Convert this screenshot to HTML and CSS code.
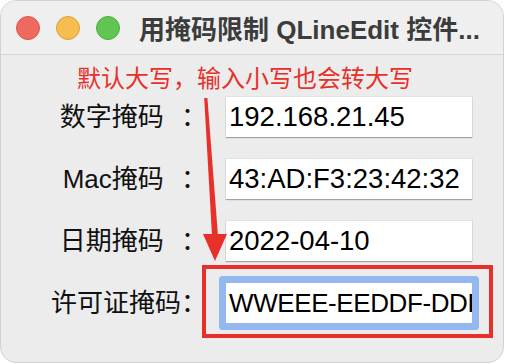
FILE: index.html
```html
<!DOCTYPE html>
<html lang="zh-CN">
<head>
<meta charset="utf-8">
<title>用掩码限制 QLineEdit 控件</title>
<link rel="stylesheet" href="styles.css">
</head>
<body>
<div class="window">
  <div class="titlebar">
    <div class="lights">
      <span class="light red"></span>
      <span class="light yellow"></span>
      <span class="light green"></span>
    </div>
    <div class="title">用掩码限制 QLineEdit 控件...</div>
  </div>
  <div class="content">
    <div class="note">默认大写，输入小写也会转大写</div>
    <div class="form">
      <div class="label">数字掩码 ：</div>
      <div class="field">192.168.21.45</div>
      <div class="label">Mac掩码 ：</div>
      <div class="field">43:AD:F3:23:42:32</div>
      <div class="label">日期掩码 ：</div>
      <div class="field">2022-04-10</div>
      <div class="label">许可证掩码：</div>
      <div class="field focused">WWEEE-EEDDF-DDDDD</div>
    </div>
  </div>
  <svg class="annot" width="506" height="364" viewBox="0 0 506 364" xmlns="http://www.w3.org/2000/svg">
    <polygon points="204.2,98 207.4,98 218,236 212,236" fill="#e8302a"/>
    <polygon points="203,234 227,234 215,261" fill="#e8302a"/>
    <rect x="204" y="267" width="287" height="69" fill="none" stroke="#e8302a" stroke-width="4"/>
  </svg>
</div>
</body>
</html>
```

FILE: styles.css
```css
html, body {
  margin: 0;
  padding: 0;
  background: #ffffff;
}

.window {
  position: relative;
  width: 504px;
  height: 363px;
  box-sizing: border-box;
  border: 1px solid #d2d2d2;
  border-radius: 16px;
  background: #ececec;
  overflow: hidden;
  font-family: "Liberation Sans", "Noto Sans CJK SC", sans-serif;
}

.titlebar {
  height: 53px;
  display: flex;
  align-items: center;
  padding-left: 15px;
  background: #efefef;
  border-bottom: 1px solid #d6d6d6;
}

.lights {
  display: flex;
  gap: 16px;
}

.light {
  width: 24px;
  height: 24px;
  border-radius: 50%;
  box-sizing: border-box;
}

.red { background: #ee6a5f; border: 1px solid #d8564c; }
.yellow { background: #f5be4f; border: 1px solid #d9a23a; }
.green { background: #61c554; border: 1px solid #4ead43; }

.title {
  margin-left: 19px;
  font-size: 26px;
  font-weight: bold;
  color: #3c3c3c;
  white-space: nowrap;
}

.content {
  padding-top: 10px;
}

.note {
  margin-left: 76px;
  font-size: 24px;
  line-height: 24px;
  height: 24px;
  color: #e8302a;
  font-family: "Noto Sans CJK SC", sans-serif;
}

.form {
  margin-top: 8px;
  display: grid;
  grid-template-columns: 206px 246px;
  grid-auto-rows: 40px;
  column-gap: 19px;
  row-gap: 22px;
}

.label {
  justify-self: end;
  align-self: center;
  font-size: 26px;
  line-height: 40px;
  word-spacing: 10px;
  color: #111111;
  white-space: nowrap;
}

.field {
  background: #ffffff;
  box-shadow: 0 1px 1px rgba(0, 0, 0, 0.28), 0 0 0 1px rgba(0, 0, 0, 0.04);
  font-size: 27.5px;
  line-height: 40px;
  padding-left: 3px;
  color: #000000;
  white-space: nowrap;
  overflow: hidden;
}

.field.focused {
  font-size: 26px;
  letter-spacing: -0.4px;
  border-radius: 1px;
  box-shadow: 0 0 0 7px #93b8ef;
}

.annot {
  position: absolute;
  left: -1px;
  top: -1px;
  pointer-events: none;
}
```
